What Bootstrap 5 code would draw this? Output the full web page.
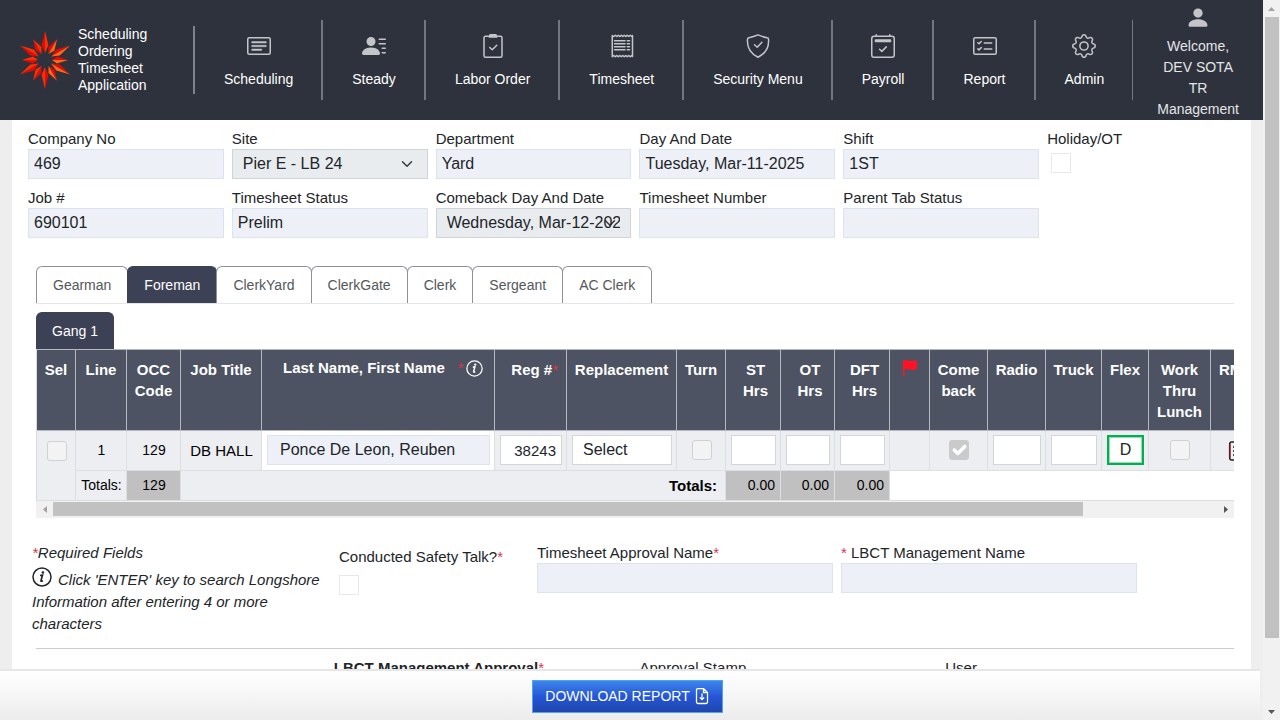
<!DOCTYPE html>
<html lang="en">
<head>
<meta charset="utf-8">
<meta name="viewport" content="width=device-width, initial-scale=1">
<title>SOTA Timesheet</title>
<link href="https://cdn.jsdelivr.net/npm/bootstrap@5.3.0/dist/css/bootstrap.min.css" rel="stylesheet">
<style>
body{font-family:"Liberation Sans",Arial,sans-serif;background:#eee;color:#212529;font-size:15px;line-height:21px}
.topbar{background:#2e323d;font-size:14px;min-height:120px}
.topbar a{color:#fff;text-decoration:none}
.topbar svg{fill:#c4c5c9;stroke:none}
.topbar svg.outline{fill:none;stroke:#c4c5c9;stroke-linecap:round;stroke-linejoin:round}
.brand-block{line-height:17px;height:68px;border-right:2px solid #80838b;width:175px;margin-left:20px;flex:none}
.brand-text{margin-left:6px}
.menu-item{height:80px;padding:14px 28px 0 29px;border-right:2px solid #74777f;white-space:nowrap}
.menu-item.last-item{border-right-width:1px}
.menu-item svg{margin-bottom:11px}
.welcome{padding:6px 24px 0}
.welcome svg{margin-bottom:6px}
.welcome a{color:#e4e5e7}
.sheet{background:#fff;margin:0 12px}
.fields{padding:8px 8px 0 16px}
.box,.form-select.box{height:30px;border:1px solid #dbe4ee;border-radius:0;background-color:#edf0f6;padding:0 5px;font-size:16px;line-height:24px;color:#212529;width:100%;display:block}
.form-select.box{background-color:#e9ecef;border-color:#ced4da;padding:0 10px;opacity:1;text-overflow:clip}
.tick.form-check-input{width:20px;height:20px;margin:4px;border:1px solid #e8e8e8;border-radius:0;float:none;display:block;opacity:1}
.work{padding:28px 17px 0 24px}
.tabs{font-size:14px;--bs-nav-tabs-border-color:#e4e6e9}
.tabs .nav-link{color:#54575b;border:1px solid #8d919b;border-bottom:0;padding:8px 16px;margin:0 -1px 0 0;line-height:20px;border-radius:6px 6px 0 0}
.tabs .nav-link.active{background:#3d4155;color:#fff;border-color:#3d4155}
.gang{margin:8px 0 -1px}
.gang .nav-link{padding:8px 15px}
.table-clip{overflow:hidden}
.crew.table{table-layout:fixed;width:1354px;border-collapse:separate;border-spacing:0;margin:0;font-size:14px;border-left:1px solid #d9dbe0}
.crew.table>*>tr>*{border-width:0 1px 1px 0;border-style:solid;border-color:#dcdee2;padding:0 4px 0 5px;text-align:center;background:#edeef2;color:#000}
.crew.table>thead>tr>*{background:#4d5362;color:#fff;font-size:15px;line-height:21px;font-weight:700;padding:9px 3px 8px;height:81px;border-color:#b5b8bf;border-top-width:1px;vertical-align:top}
.crew.table>thead>tr>.name-head{padding-top:7px;padding-left:21px;text-align:left;white-space:nowrap}
.crew.table>thead>tr>.reg-head{padding-right:8px}
.name-head .req{margin:0 2px 0 13px}
.name-head svg{vertical-align:-4px}
.crew.table>tbody>tr>*{height:40px;vertical-align:middle}
.crew.table>tbody>tr.line>*{padding-bottom:1px}
.crew.table>tbody>tr>.pick{vertical-align:top;padding-top:10px}
.crew.table>tbody>tr.sums>*{height:30px}
.crew.table>*>tr>.gray{background:#c0c0c0}
.crew.table>*>tr>.plain{background:#fff;border-right-color:#fff}
.crew.table>*>tr>.num{text-align:right;padding-right:5px}
.crew.table>tbody>tr>.job,.crew.table>tbody>tr>.totals-head{font-size:15px}
.crew.table>tbody>tr>.totals-head{padding-right:8px}
.crew .box{background-color:#fff;border-color:#d2d5da}
.crew .box.name{background-color:#edf0f6;border-color:#dbe4ee;padding-left:12px}
.crew .box.reg{font-size:15px}
.crew .plain-select.box{background-image:none}
.crew .flex-box{border:2px solid #00b050;outline:1px solid #9adbb5;outline-offset:-3px;text-align:center}
.crew .tick.form-check-input{margin:0 auto;border-color:#cfd1d4;border-radius:3px;background-color:#f3f3f3}
.crew .tick.form-check-input:checked{background-color:#cacaca;border-color:#cacaca;background-size:130%}
.w39{width:39px}.w40{width:40px}.w47{width:47px}.w49{width:49px}.w51{width:51px}.w54{width:54px}.w55{width:55px}.w56{width:56px}.w58{width:58px}.w62{width:62px}.w72{width:72px}.w81{width:81px}.w110{width:110px}.w233{width:233px}
.rail{background:#f1f1f1;flex:none}
.rail span{background:#c1c1c1}
.rail svg{flex:none;fill:#555}
.rail .idle{fill:#a3a3a3}
.rail-x{height:17px}
.rail-y{width:17px}
.track-x{padding:1px 0 2px}
.track-y{padding:0 1px 0 2px}
.thumb-x{width:88.5%}
.thumb-y{height:90.5%}
.approve{display:grid;grid-template-columns:299fr 190fr 296fr 296fr 98fr;column-gap:8px;padding:24px 8px 0 20px}
.note{padding-top:4px;line-height:22px}
.note svg{vertical-align:-2px;margin-right:6px}
.req{color:#dc3545}
.rule{border-top:1px solid #ccc;margin:13px 17px 0 24px}
.bottom-bar{height:51px;border-top:2px solid #e6e6e6;background:linear-gradient(#fff,#ececec);margin-right:3px;padding:2px 5px 0 0}
.download{font-size:14px;line-height:21px;color:#fff;height:33px;border:1px solid #4da3f7;border-radius:0;background:linear-gradient(#3f86ea,#2456d6 50%,#1f46ad);padding:0 12px}
.download:hover{color:#fff;border-color:#4da3f7}
</style>
</head>
<body class="d-flex vh-100 overflow-hidden">
<svg class="d-none"><defs>
<symbol id="info" viewBox="0 0 20 20"><circle cx="10" cy="10" r="9" fill="none" stroke="currentColor" stroke-width="1.5"/><circle cx="10.900" cy="5.500" r="1.300" fill="currentColor"/><path d="M8 8.500l2.500-.5-1.500 5.600q-.3 1.200 1.900.2" fill="none" stroke="currentColor" stroke-width="1.700"/></symbol>
</defs></svg>
<div class="d-flex flex-column flex-grow-1 overflow-hidden">
<header class="topbar d-flex align-items-center flex-shrink-0">
 <a class="brand-block d-flex align-items-center" href="#">
  <svg width="52" height="60" viewBox="-25 -30 52 60" aria-label="Star logo" role="img">
   <g id="rays"></g>
  </svg>
  <span class="brand-text">Scheduling<br>Ordering<br>Timesheet<br>Application</span>
 </a>
 <nav class="d-flex flex-shrink-0">
  <a class="menu-item text-center" href="#"><svg width="24" height="24" viewBox="0 0 16 16"><path d="M14.5 3a.5.5 0 0 1 .5.5v9a.5.5 0 0 1-.5.5h-13a.5.5 0 0 1-.5-.5v-9a.5.5 0 0 1 .5-.5h13zm-13-1A1.5 1.5 0 0 0 0 3.500v9A1.500 1.500 0 0 0 1.500 14h13a1.500 1.500 0 0 0 1.500-1.500v-9A1.500 1.500 0 0 0 14.500 2h-13z"/><path stroke="#c4c5c9" stroke-width=".3" d="M3 5.500a.5.5 0 0 1 .5-.5h9a.5.5 0 0 1 0 1h-9a.5.5 0 0 1-.5-.5zM3 8a.5.5 0 0 1 .5-.5h9a.5.5 0 0 1 0 1h-9A.5.5 0 0 1 3 8zm0 2.500a.5.5 0 0 1 .5-.5h6a.5.5 0 0 1 0 1h-6a.5.5 0 0 1-.5-.5z"/></svg><span class="d-block">Scheduling</span></a>
  <a class="menu-item text-center" href="#"><svg width="24" height="24" viewBox="0 0 16 16"><path d="M6 8a3 3 0 1 0 0-6 3 3 0 0 0 0 6zm-5 6s-1 0-1-1 1-4 6-4 6 3 6 4-1 1-1 1H1zM11 3.500a.5.5 0 0 1 .5-.5h4a.5.5 0 0 1 0 1h-4a.5.5 0 0 1-.5-.5zm.5 2.500a.5.5 0 0 0 0 1h4a.5.5 0 0 0 0-1h-4zm2 3a.5.5 0 0 0 0 1h2a.5.5 0 0 0 0-1h-2zm0 3a.5.5 0 0 0 0 1h2a.5.5 0 0 0 0-1h-2z"/></svg><span class="d-block">Steady</span></a>
  <a class="menu-item text-center" href="#"><svg class="outline" width="24" height="24" viewBox="0 0 16 16"><path d="M5 1.500H3a1 1 0 0 0-1 1v12a1 1 0 0 0 1 1h10a1 1 0 0 0 1-1v-12a1 1 0 0 0-1-1h-2M5.800 9l1.700 1.500 3-3"/><path fill="#c4c5c9" d="M6 .5h4l.5 1.500h-5z"/></svg><span class="d-block">Labor Order</span></a>
  <a class="menu-item text-center" href="#"><svg class="outline" width="24" height="24" viewBox="0 0 16 16"><path d="M1.500 1l1 .7 1-.9 1 .9 1-.9 1 .9 1-.9 1 .9 1-.9 1 .9 1-.9 1 .9 1-.9 1 .9.500-.7v14l-.5-.7-1 .9-1-.9-1 .9-1-.9-1 .9-1-.9-1 .9-1-.9-1 .9-1-.9-1 .9-1-.9-1 .9z"/><path d="M3 4.500h7M3 6.500h7M3 8.500h7M3 10.500h7M11.500 4.500h1.500M11.500 6.500h1.500M11.500 8.500h1.500M11.500 10.500h1.500"/></svg><span class="d-block">Timesheet</span></a>
  <a class="menu-item text-center" href="#"><svg class="outline" width="24" height="24" viewBox="0 0 16 16"><path d="M8 .6Q10 1.500 14 2.500q1 0 1 1c.5 6-3 10-7 12-4-2-7.500-6-7-12q0-1 1-1Q6 1.500 8 .6zM5.700 7.200l1.800 1.600 3.100-3.300"/></svg><span class="d-block">Security Menu</span></a>
  <a class="menu-item text-center" href="#"><svg class="outline" width="24" height="24" viewBox="0 0 16 16"><rect x=".5" y="1.500" width="15" height="14" rx="1.500"/><path d="M3.500.5v1M12.500.5v1M5.700 10.200l1.500 1.400 3-3"/><path fill="#c4c5c9" d="M3 4h10v1H3z"/></svg><span class="d-block">Payroll</span></a>
  <a class="menu-item text-center" href="#"><svg class="outline" width="24" height="24" viewBox="0 0 16 16"><rect x=".5" y="2.500" width="15" height="11" rx="1"/><path d="M7.500 6h5M7.500 10h5M3.200 5.800l.8.7 1.500-1.500M3.200 9.900l.8.7L5.500 9.100"/></svg><span class="d-block">Report</span></a>
  <a class="menu-item last-item text-center" href="#"><svg width="24" height="24" viewBox="0 0 16 16"><path d="M8 4.754a3.246 3.246 0 1 0 0 6.492 3.246 3.246 0 0 0 0-6.492zM5.754 8a2.246 2.246 0 1 1 4.492 0 2.246 2.246 0 0 1-4.492 0z"/><path d="M9.796 1.343c-.527-1.79-3.065-1.79-3.592 0l-.094.319a.873.873 0 0 1-1.255.52l-.292-.16c-1.64-.892-3.433.902-2.54 2.541l.159.292a.873.873 0 0 1-.52 1.255l-.319.094c-1.79.527-1.79 3.065 0 3.592l.319.094a.873.873 0 0 1 .52 1.255l-.16.292c-.892 1.64.901 3.434 2.541 2.54l.292-.159a.873.873 0 0 1 1.255.52l.094.319c.527 1.79 3.065 1.79 3.592 0l.094-.319a.873.873 0 0 1 1.255-.52l.292.16c1.64.893 3.434-.902 2.54-2.541l-.159-.292a.873.873 0 0 1 .52-1.255l.319-.094c1.79-.527 1.79-3.065 0-3.592l-.319-.094a.873.873 0 0 1-.52-1.255l.16-.292c.893-1.64-.902-3.433-2.541-2.54l-.292.159a.873.873 0 0 1-1.255-.52l-.094-.319zm-2.633.283c.246-.835 1.428-.835 1.674 0l.094.319a1.873 1.873 0 0 0 2.693 1.115l.291-.16c.764-.415 1.6.42 1.184 1.185l-.159.292a1.873 1.873 0 0 0 1.116 2.692l.318.094c.835.246.835 1.428 0 1.674l-.319.094a1.873 1.873 0 0 0-1.115 2.693l.16.291c.415.764-.42 1.6-1.185 1.184l-.291-.159a1.873 1.873 0 0 0-2.693 1.116l-.094.318c-.246.835-1.428.835-1.674 0l-.094-.319a1.873 1.873 0 0 0-2.692-1.115l-.292.16c-.764.415-1.6-.42-1.184-1.185l.159-.291A1.873 1.873 0 0 0 1.945 8.93l-.319-.094c-.835-.246-.835-1.428 0-1.674l.319-.094A1.873 1.873 0 0 0 3.06 4.377l-.16-.292c-.415-.764.42-1.6 1.185-1.184l.292.159a1.873 1.873 0 0 0 2.692-1.115l.094-.319z"/></svg><span class="d-block">Admin</span></a>
 </nav>
 <div class="welcome text-center flex-grow-1 align-self-start"><a class="d-block" href="#"><svg class="d-block mx-auto" width="24" height="24" viewBox="0 0 16 16"><path d="M8 7.800a3.100 3.100 0 1 0 0-6.200 3.100 3.100 0 0 0 0 6.200zM2.600 13.900q-.9 0-.9-1C1.700 10.600 4.500 8.900 8 8.900s6.300 1.700 6.300 4q0 1-.9 1z"/></svg>Welcome, DEV SOTA TR Management</a></div>
</header>

<main class="flex-grow-1 overflow-hidden">
<div class="sheet">
 <form class="fields">
  <div class="row g-2">
   <div class="col-2"><label class="d-block" for="f1">Company No</label><input id="f1" class="box" value="469" readonly></div>
   <div class="col-2"><label class="d-block" for="f2">Site</label><select id="f2" class="form-select box" disabled><option>Pier E - LB 24</option></select></div>
   <div class="col-2"><label class="d-block" for="f3">Department</label><input id="f3" class="box" value="Yard" readonly></div>
   <div class="col-2"><label class="d-block" for="f4">Day And Date</label><input id="f4" class="box" value="Tuesday, Mar-11-2025" readonly></div>
   <div class="col-2"><label class="d-block" for="f5">Shift</label><input id="f5" class="box" value="1ST" readonly></div>
   <div class="col-2"><label class="d-block" for="f6">Holiday/OT</label><input id="f6" class="form-check-input tick" type="checkbox"></div>
   <div class="col-2"><label class="d-block" for="f7">Job #</label><input id="f7" class="box" value="690101" readonly></div>
   <div class="col-2"><label class="d-block" for="f8">Timesheet Status</label><input id="f8" class="box" value="Prelim" readonly></div>
   <div class="col-2"><label class="d-block text-nowrap" for="f9">Comeback Day And Date</label><select id="f9" class="form-select box" disabled><option>Wednesday, Mar-12-2025</option></select></div>
   <div class="col-2"><label class="d-block" for="f10">Timesheet Number</label><input id="f10" class="box" readonly></div>
   <div class="col-2"><label class="d-block" for="f11">Parent Tab Status</label><input id="f11" class="box" readonly></div>
  </div>
 </form>

 <section class="work">
  <ul class="nav nav-tabs tabs">
   <li class="nav-item"><a class="nav-link" href="#">Gearman</a></li>
   <li class="nav-item"><a class="nav-link active" href="#">Foreman</a></li>
   <li class="nav-item"><a class="nav-link" href="#">ClerkYard</a></li>
   <li class="nav-item"><a class="nav-link" href="#">ClerkGate</a></li>
   <li class="nav-item"><a class="nav-link" href="#">Clerk</a></li>
   <li class="nav-item"><a class="nav-link" href="#">Sergeant</a></li>
   <li class="nav-item"><a class="nav-link" href="#">AC Clerk</a></li>
  </ul>
  <ul class="nav nav-tabs tabs gang"><li class="nav-item"><a class="nav-link active" href="#">Gang 1</a></li></ul>
  <div class="table-clip">
  <table class="table crew">
   <colgroup><col class="w39"><col class="w51"><col class="w54"><col class="w81"><col class="w233"><col class="w72"><col class="w110"><col class="w49"><col class="w55"><col class="w54"><col class="w55"><col class="w40"><col class="w58"><col class="w58"><col class="w56"><col class="w47"><col class="w62"><col class="w54"><col></colgroup>
   <thead><tr>
    <th>Sel</th><th>Line</th><th>OCC Code</th><th>Job Title</th>
    <th class="name-head">Last Name, First Name<span class="req fw-normal">*</span><svg width="17" height="17"><use href="#info"/></svg></th>
    <th class="reg-head text-end">Reg #<span class="req fw-normal">*</span></th><th>Replacement</th><th>Turn</th><th class="ps-2">ST<br>Hrs</th><th class="ps-2">OT<br>Hrs</th><th class="ps-2">DFT<br>Hrs</th>
    <th><svg class="d-block mx-auto" width="16" height="18" viewBox="0 0 16 18" role="img" aria-label="Flag"><path d="M1 1h1.500v16H1z" fill="#ff1226"/><path d="M1.500 1.500Q4 .5 7 1.500t8-.5v9q-4 1.500-7 .5t-6.500.5z" fill="#ff1226"/></svg></th>
    <th>Come back</th><th>Radio</th><th>Truck</th><th>Flex</th><th>Work Thru Lunch</th><th class="text-start ps-2">RM</th><th></th>
   </tr></thead>
   <tbody>
    <tr class="line">
     <td rowspan="2" class="pick"><input class="form-check-input tick" type="checkbox" aria-label="Select line 1"></td>
     <td>1</td><td>129</td><td class="job">DB HALL</td>
     <td class="bg-white"><input class="box name" aria-label="Name" value="Ponce De Leon, Reuben" readonly></td>
     <td><input class="box reg text-end" aria-label="Reg number" value="38243"></td>
     <td><select class="form-select box plain-select" aria-label="Replacement"><option>Select</option></select></td>
     <td><input class="form-check-input tick" type="checkbox" aria-label="Turn"></td>
     <td><input class="box" aria-label="ST hours"></td><td><input class="box" aria-label="OT hours"></td><td><input class="box" aria-label="DFT hours"></td><td></td>
     <td><input class="form-check-input tick" type="checkbox" checked aria-label="Come back"></td>
     <td><input class="box" aria-label="Radio"></td><td><input class="box" aria-label="Truck"></td><td><input class="box flex-box" aria-label="Flex" value="D"></td>
     <td><input class="form-check-input tick" type="checkbox" aria-label="Work thru lunch"></td>
     <td><svg width="20" height="20" viewBox="0 0 20 20" fill="none" stroke="#222" stroke-width="1.500"><path d="M1.700 17V3q0-2 2-2h12q2 0 2 2v14q0 2-2 2h-12q-2 0-2-2z"/><path d="M1.700 3v14" stroke="#7a1414"/><path d="M5 6h8M5 10h8M5 14h8"/></svg></td><td></td>
    </tr>
    <tr class="sums">
     <td>Totals:</td><td class="gray">129</td><td colspan="5" class="num totals-head fw-bold">Totals:</td>
     <td class="gray num">0.00</td><td class="gray num">0.00</td><td class="gray num">0.00</td><td class="plain" colspan="8"></td>
    </tr>
   </tbody>
  </table>
  </div>
  <div class="rail rail-x d-flex align-items-center">
   <svg class="idle" width="17" height="17"><path d="M11 5v7L7 8.500z"/></svg>
   <div class="flex-grow-1 h-100 d-flex track-x"><span class="thumb-x"></span></div>
   <svg width="17" height="17"><path d="M7 5v7l4-3.500z"/></svg>
  </div>
 </section>

 <section class="approve">
  <div class="fst-italic"><span class="req">*</span>Required Fields<div class="note"><svg width="20" height="20"><use href="#info"/></svg>Click 'ENTER' key to search Longshore Information after entering 4 or more characters</div></div>
  <div class="pt-1"><label for="talk" class="d-block text-nowrap">Conducted Safety Talk?<span class="req">*</span></label><input id="talk" class="form-check-input tick ms-0 mt-2" type="checkbox"></div>
  <div><label class="d-block" for="apn">Timesheet Approval Name<span class="req">*</span></label><input id="apn" class="box" readonly></div>
  <div><label class="d-block" for="lmn"><span class="req">*</span> LBCT Management Name</label><input id="lmn" class="box" readonly></div>
 </section>
 <div class="rule"></div>
 <section class="fields">
  <div class="row g-2">
   <div class="col-3"></div>
   <div class="col-3"><strong>LBCT Management Approval</strong><span class="req">*</span></div>
   <div class="col-3">Approval Stamp</div>
   <div class="col-3">User</div>
  </div>
 </section>
</div>
</main>
<footer class="bottom-bar d-flex justify-content-center align-items-center flex-shrink-0">
 <button class="btn download d-flex align-items-center gap-1" type="button">DOWNLOAD REPORT <svg width="16" height="18" viewBox="0 0 16 18" fill="none" stroke="#fff" stroke-width="1.300"><path d="M9.500.5H4A1.500 1.500 0 0 0 2.500 2v12A1.500 1.500 0 0 0 4 15.500h8a1.500 1.500 0 0 0 1.500-1.500V4.500zV4.500h4M8 5.500v6M5.800 9.500L8 11.700l2.200-2.200"/></svg></button>
</footer>
</div>
<div class="rail rail-y d-flex flex-column align-items-center">
 <svg class="idle" width="17" height="17"><path d="M5 11h7L8.500 7z"/></svg>
 <div class="flex-grow-1 w-100 track-y"><span class="thumb-y d-block"></span></div>
 <svg width="17" height="17"><path d="M5 7h7l-3.500 4z"/></svg>
</div>
<script>
// Twelve two-tone rays around the logo centre: [angle, reach]
document.getElementById('rays').innerHTML = [[0,29],[30,24],[60,29],[90,23],[120,29],[150,24],[180,29],[210,24],[240,29],[270,23],[300,29],[330,24]]
 .map(([a,r]) => `<g transform="rotate(${a})"><path fill="#e50909" d="M0-${r}L-3.400-${r-14+(r<26?3:0)} 0-7z"/><path fill="${a>0&&a<180?'#ff6a10':'#f83300'}" d="M0-${r}L3.400-${r-14+(r<26?3:0)} 0-7z"/></g>`).join('');
</script>
<script src="https://cdn.jsdelivr.net/npm/bootstrap@5.3.0/dist/js/bootstrap.bundle.min.js"></script>
</body>
</html>
